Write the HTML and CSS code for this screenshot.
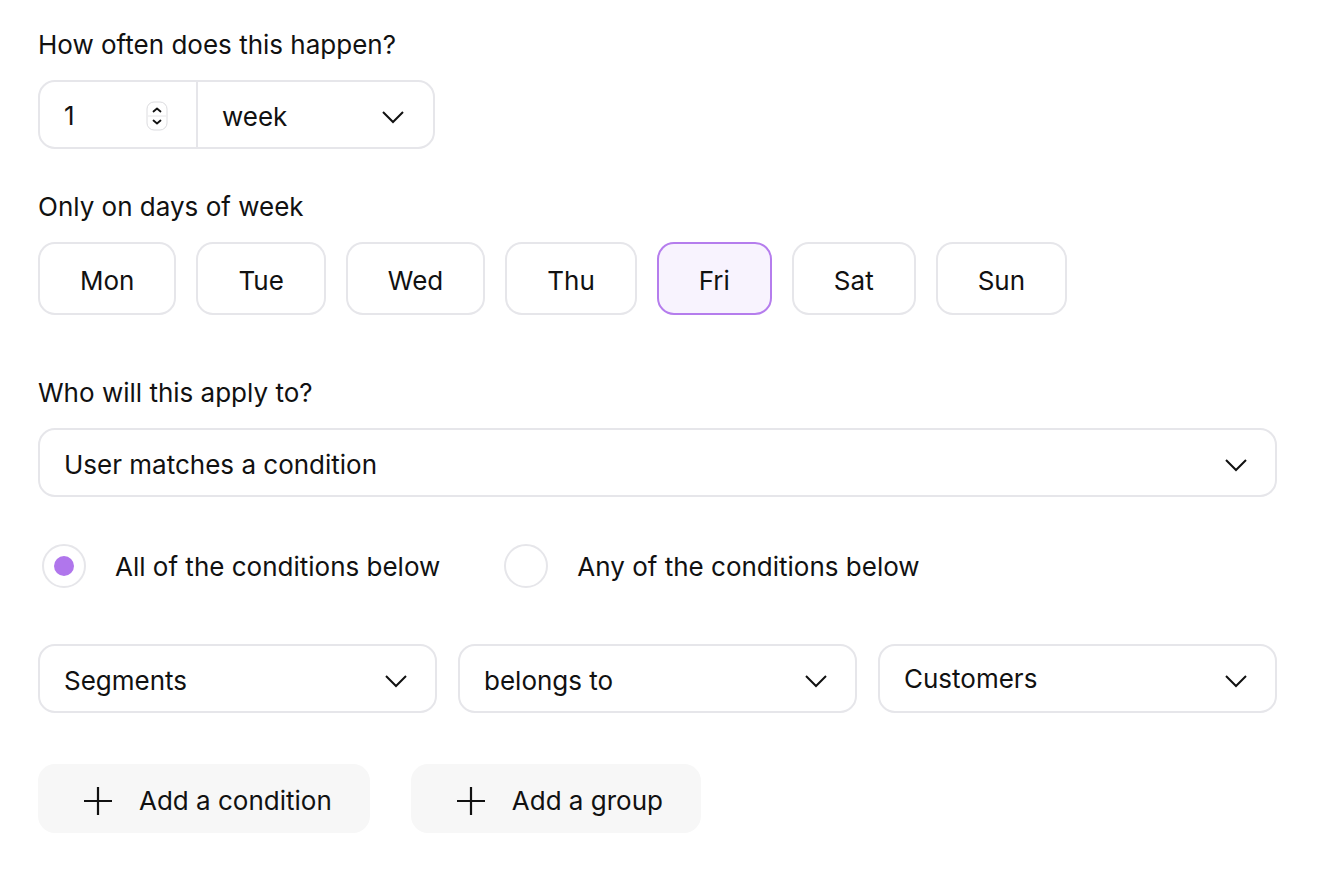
FILE: index.html
```html
<!DOCTYPE html>
<html>
<head>
<meta charset="utf-8">
<link rel="stylesheet" href="styles.css">
</head>
<body>
<div class="page">
  <div class="label">How often does this happen?</div>
  <div class="freq">
    <div class="num">
      <span>1</span>
      <svg class="spin" width="22" height="30" viewBox="0 0 22 30">
        <rect x="1" y="1" width="20" height="28" rx="7" fill="#fff" stroke="#dcdcdf" stroke-width="1"/>
        <line x1="2" y1="15" x2="20" y2="15" stroke="#e6e6e8" stroke-width="1"/>
        <path d="M7.5 10.5 L11 7.5 L14.5 10.5" fill="none" stroke="#111" stroke-width="1.8" stroke-linecap="round" stroke-linejoin="round"/>
        <path d="M7.5 19.5 L11 22.5 L14.5 19.5" fill="none" stroke="#111" stroke-width="1.8" stroke-linecap="round" stroke-linejoin="round"/>
      </svg>
    </div>
    <div class="unit">
      <span>week</span>
      <svg class="chev" width="22" height="14" viewBox="0 0 22 14"><path d="M1 2 L11 12 L21 2" fill="none" stroke="#111" stroke-width="2"/></svg>
    </div>
  </div>

  <div class="label l2">Only on days of week</div>
  <div class="days">
    <div class="day">Mon</div>
    <div class="day">Tue</div>
    <div class="day">Wed</div>
    <div class="day">Thu</div>
    <div class="day active">Fri</div>
    <div class="day">Sat</div>
    <div class="day">Sun</div>
  </div>

  <div class="label l3">Who will this apply to?</div>
  <div class="select full">
    <span>User matches a condition</span>
    <svg class="chev" width="22" height="14" viewBox="0 0 22 14"><path d="M1 2 L11 12 L21 2" fill="none" stroke="#111" stroke-width="2"/></svg>
  </div>

  <div class="radios">
    <div class="radio"><span class="circle on"><span class="dot"></span></span><span>All of the conditions below</span></div>
    <div class="radio"><span class="circle"></span><span>Any of the conditions below</span></div>
  </div>

  <div class="conds">
    <div class="select">
      <span>Segments</span>
      <svg class="chev" width="22" height="14" viewBox="0 0 22 14"><path d="M1 2 L11 12 L21 2" fill="none" stroke="#111" stroke-width="2"/></svg>
    </div>
    <div class="select">
      <span>belongs to</span>
      <svg class="chev" width="22" height="14" viewBox="0 0 22 14"><path d="M1 2 L11 12 L21 2" fill="none" stroke="#111" stroke-width="2"/></svg>
    </div>
    <div class="select up">
      <span>Customers</span>
      <svg class="chev" width="22" height="14" viewBox="0 0 22 14"><path d="M1 2 L11 12 L21 2" fill="none" stroke="#111" stroke-width="2"/></svg>
    </div>
  </div>

  <div class="adds">
    <div class="add c1">
      <svg width="30" height="30" viewBox="0 0 30 30"><path d="M15 1 V29 M1 15 H29" stroke="#111" stroke-width="2.2"/></svg>
      <span>Add a condition</span>
    </div>
    <div class="add c2">
      <svg width="30" height="30" viewBox="0 0 30 30"><path d="M15 1 V29 M1 15 H29" stroke="#111" stroke-width="2.2"/></svg>
      <span>Add a group</span>
    </div>
  </div>
</div>
</body>
</html>
```
FILE: styles.css
```css
* { box-sizing: border-box; }
body {
  margin: 0;
  background: #fff;
  font-family: Inter, "Noto Sans", sans-serif;
  color: #111;
  font-size: 26px;
}
.page {
  padding: 29px 0 0 38px;
  width: 1277px;
}
.label {
  line-height: 32px;
  height: 32px;
  margin-bottom: 19px;
}
.l2 { margin-top: 42px; }
.l3 { margin-top: 62px; margin-bottom: 19px; }

.freq {
  display: flex;
  width: 397px;
  height: 69px;
  border: 2px solid #e6e6ea;
  border-radius: 17px;
}
.num {
  width: 158px;
  border-right: 2px solid #e6e6ea;
  display: flex;
  align-items: center;
  justify-content: space-between;
  padding: 2px 28px 0 24px;
}
.spin { display: block; }
.unit {
  flex: 1;
  display: flex;
  align-items: center;
  justify-content: space-between;
  padding: 4px 29px 0 24px;
}
.chev { display: block; }

.days {
  display: flex;
  gap: 20px;
}
.day {
  height: 73px;
  border: 2px solid #e6e6ea;
  border-radius: 17px;
  display: flex;
  align-items: center;
  justify-content: center;
  padding: 4px 40px 0;
}
.day.active {
  border-color: #b57ded;
  background: #f8f3fe;
}

.select {
  height: 69px;
  border: 2px solid #e6e6ea;
  border-radius: 17px;
  display: flex;
  align-items: center;
  justify-content: space-between;
  padding: 4px 28px 0 24px;
}
.select.full { width: 1239px; }
.select.up span { position: relative; top: -2px; }

.radios {
  display: flex;
  margin-top: 47px;
  padding-left: 4px;
}
.radio {
  display: flex;
  align-items: center;
  gap: 29px;
  margin-right: 64px;
}
.circle {
  width: 44px;
  height: 44px;
  border-radius: 50%;
  border: 2px solid #e6e6ea;
  display: flex;
  align-items: center;
  justify-content: center;
}
.dot {
  width: 20px;
  height: 20px;
  border-radius: 50%;
  background: #b076ec;
}

.conds {
  display: grid;
  grid-template-columns: repeat(3, 1fr);
  gap: 21px;
  margin-top: 56px;
}

.adds {
  display: flex;
  gap: 41px;
  margin-top: 51px;
}
.add {
  height: 69px;
  background: #f7f7f7;
  border-radius: 17px;
  display: flex;
  align-items: center;
  gap: 26px;
  padding: 4px 38px 0 45px;
}
.add svg { display: block; }
```
